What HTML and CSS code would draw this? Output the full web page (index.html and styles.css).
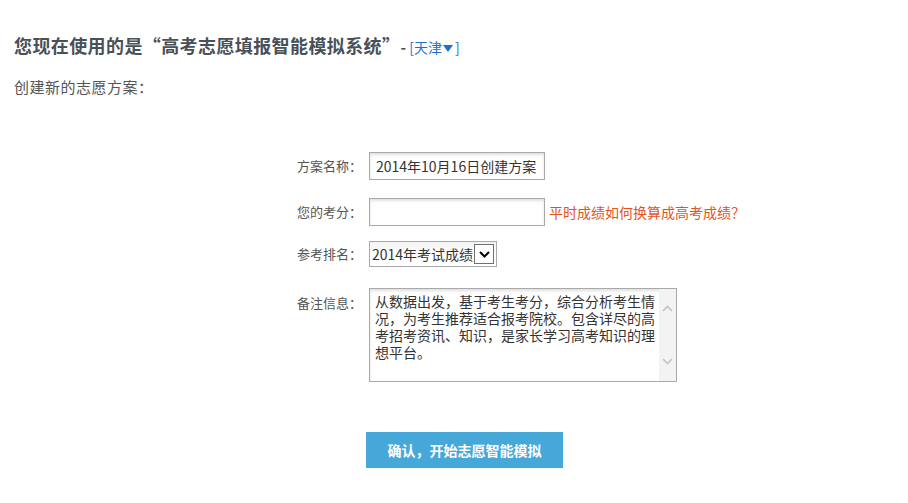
FILE: index.html
```html
<!DOCTYPE html>
<html lang="zh-CN">
<head>
<meta charset="UTF-8">
<meta name="viewport" content="width=device-width, initial-scale=1.0">
<title>高考志愿填报智能模拟系统</title>
<link rel="stylesheet" href="styles.css">
</head>
<body>
    <div class="page">
        <h1 class="title">您现在使用的是“高考志愿填报智能模拟系统”<span class="dash">-</span><a class="area" href="#">[天津<span class="tri"></span>]</a></h1>
        <p class="subtitle">创建新的志愿方案：</p>

        <form class="plan-form">
            <label class="row-label" for="planName">方案名称：</label>
            <div class="row-field">
                <input type="text" id="planName" class="text-input" value="2014年10月16日创建方案">
            </div>

            <label class="row-label" for="score">您的考分：</label>
            <div class="row-field">
                <input type="text" id="score" class="text-input">
                <a class="hint" href="#">平时成绩如何换算成高考成绩？</a>
            </div>

            <label class="row-label row-select" for="rank">参考排名：</label>
            <div class="row-field row-select">
                <div class="select-box">
                    <select id="rank">
                        <option>2014年考试成绩</option>
                    </select>
                    <span class="select-btn">
                        <svg width="11" height="7" viewBox="0 0 11 7"><path d="M1 1 L5.5 5.5 L10 1" fill="none" stroke="#000" stroke-width="2"/></svg>
                    </span>
                </div>
            </div>

            <label class="row-label row-note" for="note">备注信息：</label>
            <div class="row-field row-note">
                <div class="note-box">
                    <textarea id="note">从数据出发，基于考生考分，综合分析考生情况，为考生推荐适合报考院校。包含详尽的高考招考资讯、知识，是家长学习高考知识的理想平台。</textarea>
                    <div class="scrollbar">
                        <svg width="11" height="7" viewBox="0 0 11 7"><path d="M1 6 L5.5 1.5 L10 6" fill="none" stroke="#c4c4c4" stroke-width="1.6"/></svg>
                        <svg width="11" height="7" viewBox="0 0 11 7"><path d="M1 1 L5.5 5.5 L10 1" fill="none" stroke="#c4c4c4" stroke-width="1.6"/></svg>
                    </div>
                </div>
            </div>
        </form>

        <div class="actions">
            <button type="button" class="submit">确认，开始志愿智能模拟</button>
        </div>
    </div>
</body>
</html>
```

FILE: styles.css
```css
body {
    margin: 0;
    font-family: "Noto Sans CJK SC", "Liberation Sans", sans-serif;
    color: #555;
    background: #fff;
}

.page {
    padding: 32px 14px 0 14px;
}

.title {
    margin: 0;
    font-size: 18px;
    line-height: 26px;
    font-weight: bold;
    letter-spacing: 0.4px;
    color: #4a5057;
}

.dash {
    font-size: 15px;
    margin: 0 3px 0 0;
    color: #4a5057;
}

.area {
    font-size: 14px;
    font-weight: normal;
    letter-spacing: 0;
    color: #1f6fd0;
    text-decoration: none;
}

.tri {
    display: inline-block;
    width: 0;
    height: 0;
    border-left: 5px solid transparent;
    border-right: 5px solid transparent;
    border-top: 7px solid #1f6fd0;
    margin: 0 2px 2px 1px;
    vertical-align: middle;
}

.subtitle {
    margin: 16px 0 0 0;
    font-size: 15px;
    line-height: 22px;
    letter-spacing: 0.5px;
    color: #555;
}

.plan-form {
    display: grid;
    grid-template-columns: 120px auto;
    column-gap: 7px;
    row-gap: 18px;
    margin: 54px 0 0 228px;
}

.row-label {
    text-align: right;
    font-size: 13px;
    line-height: 28px;
    color: #555;
}

.row-field {
    display: flex;
    align-items: center;
}

.text-input {
    width: 176px;
    height: 28px;
    box-sizing: border-box;
    border: 1px solid #a9a9a9;
    box-shadow: inset 0 2px 3px rgba(0, 0, 0, 0.12);
    padding: 0 6px;
    font-family: inherit;
    font-size: 14px;
    color: #333;
    outline: none;
}

.hint {
    margin-left: 4px;
    font-size: 14px;
    color: #e2541b;
    text-decoration: none;
}

.row-select {
    margin-top: -4px;
}

.select-box {
    display: flex;
    align-items: center;
    width: 128px;
    height: 26px;
    box-sizing: border-box;
    border: 1px solid #a9a9a9;
    background: linear-gradient(#f4f4f4, #fff 60%);
}

.select-box select {
    flex: 1;
    min-width: 0;
    border: none;
    background: transparent;
    appearance: none;
    -webkit-appearance: none;
    padding: 0 0 0 2px;
    font-family: inherit;
    font-size: 14px;
    color: #333;
    outline: none;
}

.select-btn {
    display: flex;
    align-items: center;
    justify-content: center;
    width: 18px;
    height: 18px;
    margin-right: 2px;
    border: 1px solid #707070;
    background: #fff;
}

.row-note {
    margin-top: 2px;
}

.row-label.row-note {
    line-height: 30px;
}

.note-box {
    display: flex;
    width: 308px;
    height: 94px;
    box-sizing: border-box;
    border: 1px solid #a9a9a9;
    box-shadow: inset 0 2px 3px rgba(0, 0, 0, 0.12);
}

.note-box textarea {
    flex: 1;
    border: none;
    background: transparent;
    resize: none;
    padding: 4px 0 0 5px;
    font-family: inherit;
    font-size: 14px;
    line-height: 17px;
    color: #333;
    outline: none;
    overflow: hidden;
}

.scrollbar {
    width: 17px;
    background: #f3f3f3;
    display: flex;
    flex-direction: column;
    justify-content: space-between;
    align-items: center;
    padding: 16px 0 16px 0;
}

.actions {
    padding: 50px 0 0 352px;
}

.submit {
    width: 197px;
    height: 36px;
    border: none;
    background: #46a8d9;
    color: #fff;
    font-family: inherit;
    font-size: 14px;
    font-weight: bold;
    cursor: pointer;
}
```
